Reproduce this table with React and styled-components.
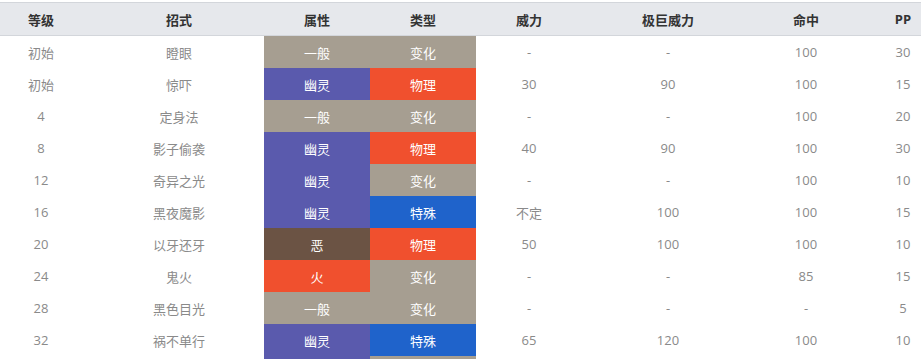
import styled, { createGlobalStyle } from 'styled-components';

const GlobalStyle = createGlobalStyle`
    html, body {
        margin: 0;
        padding: 0;
        background: #fff;
        overflow: hidden;
    }
    body {
        font-family: "Open Sans", "Noto Sans CJK SC", sans-serif;
    }
`;

const COLS = '106px 170px 106px 106px 106px 172px 104px 90px';

const TYPE_COLORS = {
    一般: '#a69e91',
    幽灵: '#5a5aad',
    恶: '#6b5344',
    火: '#f0502e',
    物理: '#f0502e',
    特殊: '#1f63cb',
    变化: '#a69e91',
};

const moves = [
    ['初始', '瞪眼', '一般', '变化', '-', '-', '100', '30'],
    ['初始', '惊吓', '幽灵', '物理', '30', '90', '100', '15'],
    ['4', '定身法', '一般', '变化', '-', '-', '100', '20'],
    ['8', '影子偷袭', '幽灵', '物理', '40', '90', '100', '30'],
    ['12', '奇异之光', '幽灵', '变化', '-', '-', '100', '10'],
    ['16', '黑夜魔影', '幽灵', '特殊', '不定', '100', '100', '15'],
    ['20', '以牙还牙', '恶', '物理', '50', '100', '100', '10'],
    ['24', '鬼火', '火', '变化', '-', '-', '85', '15'],
    ['28', '黑色目光', '一般', '变化', '-', '-', '-', '5'],
    ['32', '祸不单行', '幽灵', '特殊', '65', '120', '100', '10'],
];

// the next row only peeks in at the bottom edge: just its colour strips show
const nextRow = ['幽灵', '变化'];

const Page = styled.div`
    padding-top: 2px;
    margin-left: -12px;
`;

const HeaderRow = styled.div`
    display: grid;
    grid-template-columns: ${COLS};
    height: 32px;
    background: #e6e8ec;
    border-top: 1px solid #d3d6db;
    border-bottom: 1px solid #d3d6db;
`;

const HeadCell = styled.div`
    display: flex;
    align-items: center;
    justify-content: center;
    font-size: 13px;
    font-weight: 700;
    color: #333;
`;

const Row = styled.div`
    display: grid;
    grid-template-columns: ${COLS};
    height: 32px;
`;

const Cell = styled.div`
    display: flex;
    align-items: center;
    justify-content: center;
    font-size: 13px;
    color: ${(p) => (p.$bg ? '#fff' : '#8a8a8a')};
    background: ${(p) => p.$bg || 'transparent'};
`;

const headers = ['等级', '招式', '属性', '类型', '威力', '极巨威力', '命中', 'PP'];

export default function App() {
    return (
        <>
            <GlobalStyle />
            <Page>
                <HeaderRow>
                    {headers.map((h) => (
                        <HeadCell key={h}>{h}</HeadCell>
                    ))}
                </HeaderRow>
                {moves.map((m) => (
                    <Row key={m[1]}>
                        {m.map((v, i) => (
                            <Cell key={i} $bg={i === 2 || i === 3 ? TYPE_COLORS[v] : null}>
                                {v}
                            </Cell>
                        ))}
                    </Row>
                ))}
                <Row>
                    <Cell />
                    <Cell />
                    {nextRow.map((t) => (
                        <Cell key={t} $bg={TYPE_COLORS[t]} />
                    ))}
                </Row>
            </Page>
        </>
    );
}
